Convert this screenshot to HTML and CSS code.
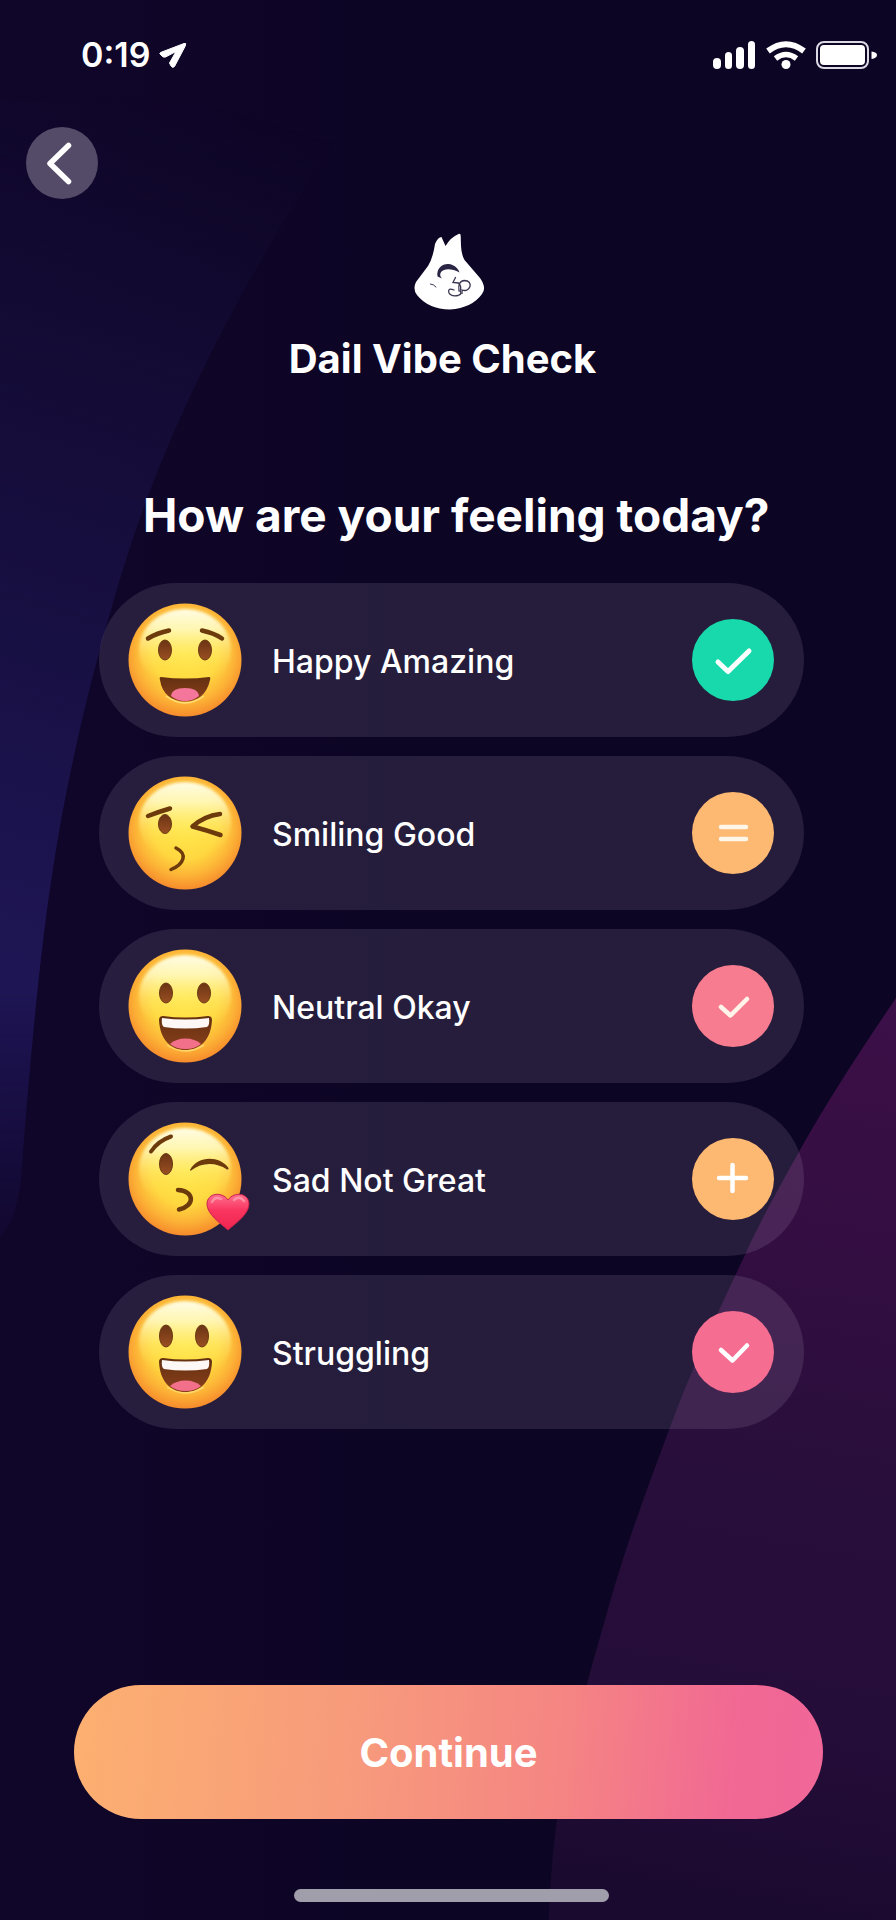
FILE: index.html
```html
<!DOCTYPE html>
<html lang="en">
<head>
<meta charset="utf-8">
<meta name="viewport" content="width=device-width, initial-scale=1">
<title>Dail Vibe Check</title>
<link rel="stylesheet" href="styles.css">
</head>
<body>
<div class="screen">
  <svg class="backdrop" viewBox="0 0 896 1920" preserveAspectRatio="none" aria-hidden="true">
    <defs>
      <linearGradient id="blue" gradientUnits="userSpaceOnUse" x1="260" y1="120" x2="0" y2="960">
        <stop offset="0" stop-color="#140b34" stop-opacity="0"/>
        <stop offset="0.3" stop-color="#150d38" stop-opacity="0.8"/>
        <stop offset="0.75" stop-color="#1a1249"/>
        <stop offset="1" stop-color="#1e1554"/>
      </linearGradient>
      <linearGradient id="blueEnd" x1="0" y1="0" x2="0" y2="1">
        <stop offset="0.8" stop-color="#fff"/>
        <stop offset="1" stop-color="#222"/>
      </linearGradient>
      <mask id="fade"><rect width="896" height="1240" fill="url(#blueEnd)"/></mask>
      <linearGradient id="plum" gradientUnits="userSpaceOnUse" x1="880" y1="1020" x2="720" y2="1900">
        <stop offset="0" stop-color="#3b0f47"/>
        <stop offset="0.25" stop-color="#340e42"/>
        <stop offset="0.5" stop-color="#290e3b"/>
        <stop offset="0.8" stop-color="#240d38"/>
        <stop offset="1" stop-color="#1b0a30"/>
      </linearGradient>
    </defs>
    <path d="M0 100L360 110C290 200 208 345 158 470C128 545 108 618 90 687C72 760 60 820 51 882C40 955 30 1060 22 1165C20 1200 12 1228 0 1236Z" fill="url(#blue)" mask="url(#fade)"/>
    <path d="M896 998C862 1048 828 1100 800 1150C772 1200 755 1232 745 1255C716 1316 692 1368 669 1430C646 1492 624 1550 605 1620C580 1705 564 1775 557 1820C552 1856 550 1890 549 1920L896 1920Z" fill="url(#plum)"/>
  </svg>

  <header class="status">
    <div class="status-left">
      <span class="time">0:19</span>
      <svg class="locate" viewBox="0 0 28 27" aria-hidden="true"><path d="M1.500 10.500L25 1.500Q27.500.500 26.500 3.500L15.500 24.500Q13.500 26.500 12 24L10.500 21L17 9.500L6.500 15Q4 15.500 3 14L1 12Q.500 11 1.500 10.500Z" fill="#fff" stroke="#fff" stroke-linejoin="round"/></svg>
    </div>
    <div class="status-right">
      <svg class="signal" viewBox="0 0 43 28" aria-label="Signal"><g fill="#fff"><rect x="0" y="17" width="8" height="11" rx="4"/><rect x="12" y="11" width="7" height="17" rx="3.500"/><rect x="23" y="6" width="8" height="22" rx="4"/><rect x="35" y="0" width="7" height="28" rx="3.500"/></g></svg>
      <svg class="wifi" viewBox="0 0 40 28" aria-label="Wi-Fi"><g fill="none" stroke="#fff" stroke-width="6"><path d="M2 10Q20 -3.500 38 10" /><path d="M9.500 17.500Q20 9.500 30.500 17.500" stroke-width="5.500"/></g><circle cx="20" cy="23.500" r="4.500" fill="#fff"/></svg>
      <svg class="battery" viewBox="0 0 62 28" aria-label="Battery"><rect x="1" y="1" width="51" height="26" rx="7" fill="none" stroke="#dcdae4" stroke-width="2"/><rect x="4" y="4" width="45" height="20" rx="4" fill="#fff"/><path d="M55.500 10.500Q61 11 61 14T55.500 18Z" fill="#fff"/></svg>
    </div>
  </header>

  <button class="back" type="button" aria-label="Back">
    <svg viewBox="0 0 72 72" aria-hidden="true"><path d="M42.500 18.500L24 36.500L42.500 54.500" fill="none" stroke="#fff" stroke-width="5.500" stroke-linecap="round" stroke-linejoin="round"/></svg>
  </button>

  <main class="content">
    <div class="brand">
      <svg class="logo" viewBox="0 0 71 77" aria-hidden="true">
        <path d="M21 11Q24 4 27.500 4L31.500 13Q37 4 44.500 1Q46.700 0 46.700 3L47 13Q47.500 22 50.500 27L66 45Q73 55 68 61Q58 75 36 76.500Q14 76 3 62Q-1.500 56 2 49L14 33Q19 25 21 11Z" fill="#fff"/>
        <path d="M23.500 43.500C22 35 29 30.500 34.500 31C40 31.500 44 35 45.500 39.500C37 35 29 35.500 26.500 40Q25.500 43 28 45.500Z" fill="#2b2545"/>
        <g fill="none" stroke="#3a3550" stroke-width="1.300" stroke-linecap="round"><path d="M16.500 51Q19.500 51 22 54" stroke-width="1"/><path d="M41.500 44.500L39 49.500L44.500 50Q47.500 53 46.500 57"/><path d="M40 57Q33.500 54.500 34.800 59.500Q37 64 44 62.500Q48.500 61 46 58"/><path d="M45 58Q43.500 48 50.500 47.500Q57 48 56 53.500Q53.500 59 48 57L48 60.500"/></g>
      </svg>
      <h1 class="title">Dail Vibe Check</h1>
    </div>

    <section class="mood" aria-labelledby="question">
      <h2 class="question" id="question">How are your feeling today?</h2>
      <ul class="options">
        <li>
          <button class="option" type="button">
            <svg class="face" viewBox="0 0 114 114" aria-hidden="true">
              <defs>
                <radialGradient id="skin" gradientUnits="userSpaceOnUse" cx="57" cy="50" r="66">
                  <stop offset="0" stop-color="#ffe445"/><stop offset="0.5" stop-color="#ffd840"/><stop offset="0.76" stop-color="#fcb236"/><stop offset="1" stop-color="#f5842a"/>
                </radialGradient>
                <linearGradient id="shine" x1="0" y1="0" x2="0" y2="1">
                  <stop offset="0" stop-color="#fffde6"/><stop offset="0.25" stop-color="#fffbc4" stop-opacity="0.85"/><stop offset="0.55" stop-color="#fff27a" stop-opacity="0.4"/><stop offset="0.85" stop-color="#ffe94f" stop-opacity="0"/>
                </linearGradient>
                <filter id="soft" x="-10%" y="-10%" width="120%" height="120%"><feGaussianBlur stdDeviation="1.600"/></filter>
                <linearGradient id="eye" x1="0" y1="0" x2="0" y2="1"><stop offset="0" stop-color="#6b3414"/><stop offset="1" stop-color="#9a4f22"/></linearGradient>
                <linearGradient id="mouth" x1="0" y1="0" x2="0" y2="1"><stop offset="0" stop-color="#64300f"/><stop offset="1" stop-color="#8a3f1d"/></linearGradient>
                <linearGradient id="heart" x1="0" y1="0" x2="0" y2="1"><stop offset="0" stop-color="#ff6f8d"/><stop offset="0.45" stop-color="#f93560"/><stop offset="1" stop-color="#f0254e"/></linearGradient>
                <g id="head"><circle cx="57" cy="57" r="56.500" fill="url(#skin)"/><ellipse cx="57" cy="47" rx="46" ry="41" fill="url(#shine)" filter="url(#soft)"/></g>
                <g id="grin">
                  <path d="M35 67Q57 70 80 67Q84 67 84 71C83 91 72 101 57.500 101S32 91 31 71Q31 67 35 67Z" fill="url(#mouth)"/>
                  <path d="M39 96Q57 108 76 96" fill="none" stroke="#ffe27a" stroke-width="1.500" opacity="0.8"/>
                  <path d="M42 95Q48 89.500 57.500 89.500T73 95Q67 100 57.500 100T42 95Z" fill="#f3708a"/>
                  <path d="M34 69Q57 72 81 69Q82 76 79 78Q57 81 36 78Q33 76 34 69Z" fill="#fdf8f5"/>
                </g>
              </defs>
              <use href="#head"/>
              <g fill="none" stroke="#6d3a0c" stroke-width="4.500" stroke-linecap="round"><path d="M20 35.500Q29 30 41 27.500"/><path d="M74 27.500Q86 30 94 35.500"/></g>
              <g fill="url(#eye)" stroke="#6b3a12"><ellipse cx="37" cy="47" rx="6.500" ry="10"/><ellipse cx="77" cy="47" rx="6.500" ry="10"/></g>
              <path d="M33 74Q57 77 81 74Q83 74 82 77C79 91 70 98.500 57 98.500S34 91 32 77Q31 74 33 74Z" fill="url(#mouth)"/>
              <path d="M38 93Q57 107 76 93" fill="none" stroke="#ffe27a" stroke-width="1.500"/>
              <path d="M43 93Q44 85 57 85T71 93Q65 98 57 98T43 93Z" fill="#f5769b"/>
            </svg>
            <span class="label">Happy Amazing</span>
            <svg class="badge badge-green" viewBox="0 0 82 82" aria-hidden="true"><path d="M26 43L36 52.500L57 32" fill="none" stroke="#fff" stroke-width="5" stroke-linecap="round" stroke-linejoin="round"/></svg>
          </button>
        </li>
        <li>
          <button class="option" type="button">
            <svg class="face" viewBox="0 0 114 114" aria-hidden="true">
              <use href="#head"/>
              <g fill="none" stroke="#6d3a0c" stroke-width="4.500" stroke-linecap="round" stroke-linejoin="round"><path d="M20 40Q30 36 42 32.500"/><path d="M92 38Q76 40 64.500 50.500Q78 54 92.500 59"/><path d="M48 72C60 78 56 88 43 93.500" stroke-width="3.500"/></g>
              <ellipse cx="37" cy="48" rx="6.500" ry="9.500" fill="url(#eye)" stroke="#6b3a12"/>
            </svg>
            <span class="label">Smiling Good</span>
            <svg class="badge badge-orange" viewBox="0 0 82 82" aria-hidden="true"><path d="M29 35H54M29 47H54" fill="none" stroke="#fff6ea" stroke-width="4.500" stroke-linecap="round"/></svg>
          </button>
        </li>
        <li>
          <button class="option" type="button">
            <svg class="face" viewBox="0 0 114 114" aria-hidden="true">
              <use href="#head"/>
              <g fill="url(#eye)" stroke="#6b3a12"><ellipse cx="38" cy="44" rx="6.500" ry="10"/><ellipse cx="76" cy="44" rx="6.500" ry="10"/></g>
              <use href="#grin"/>
            </svg>
            <span class="label">Neutral Okay</span>
            <svg class="badge badge-coral" viewBox="0 0 82 82" aria-hidden="true"><path d="M29 42L38.500 50.500L55 34" fill="none" stroke="#fff4ea" stroke-width="4.500" stroke-linecap="round" stroke-linejoin="round"/></svg>
          </button>
        </li>
        <li>
          <button class="option" type="button">
            <svg class="face" viewBox="0 0 114 114" aria-hidden="true">
              <use href="#head"/>
              <g fill="none" stroke="#6d3a0c" stroke-linecap="round" stroke-linejoin="round"><path d="M23 29.500Q30 19 43 14.500" stroke-width="4"/><path d="M50 68C67 69 67 84 51 87.500" stroke-width="4.500"/></g>
              <path d="M62 48C70 33 92 34 100.500 46Q101 48 99 47.500C88 40 74 40 63 48.500Q62 49 62 48Z" fill="#6d3a0c"/>
              <ellipse cx="38" cy="42" rx="6.500" ry="10.500" fill="url(#eye)" stroke="#6b3a12"/>
              <path d="M100 108C92 101 79 92 79 82C79 71 94 69 100 78C106 69 121 71 121 82C121 92 108 101 100 108Z" fill="url(#heart)" stroke="#c8224c"/>
              <path d="M84 80Q87 74 93 77M106 78Q111 73 116 79" fill="none" stroke="#ffb0c0" stroke-width="2.500" stroke-linecap="round" opacity="0.6"/>
            </svg>
            <span class="label">Sad Not Great</span>
            <svg class="badge badge-orange" viewBox="0 0 82 82" aria-hidden="true"><path d="M27 40H54M40.500 27V53" fill="none" stroke="#fff" stroke-width="4.500" stroke-linecap="round"/></svg>
          </button>
        </li>
        <li>
          <button class="option" type="button">
            <svg class="face" viewBox="0 0 114 114" aria-hidden="true">
              <use href="#head"/>
              <g fill="url(#eye)" stroke="#6b3a12"><ellipse cx="38" cy="41" rx="6.500" ry="11"/><ellipse cx="74" cy="41" rx="6.500" ry="11"/></g>
              <use href="#grin" y="-4"/>
            </svg>
            <span class="label">Struggling</span>
            <svg class="badge badge-pink" viewBox="0 0 82 82" aria-hidden="true"><path d="M29 39L40.500 49.500L55 34.500" fill="none" stroke="#fff" stroke-width="4.500" stroke-linecap="round" stroke-linejoin="round"/></svg>
          </button>
        </li>
      </ul>
    </section>
  </main>

  <footer class="footer">
    <div class="action">
      <button class="continue" type="button">Continue</button>
    </div>
    <div class="home">
      <div class="home-bar"></div>
    </div>
  </footer>
</div>
</body>
</html>
```

FILE: styles.css
```css
* {
  box-sizing: border-box;
}

body {
  margin: 0;
  background: #0d0524;
  color: #fff;
  font-family: Inter, Roboto, "Liberation Sans", sans-serif;
}

button {
  border: 0;
  padding: 0;
  color: inherit;
  font: inherit;
  cursor: pointer;
}

svg {
  display: block;
  flex: none;
}

.screen {
  position: relative;
  isolation: isolate;
  display: flex;
  flex-direction: column;
  min-height: 100vh;
  background: linear-gradient(90deg, #10062a, #0d0524 50%);
}

.backdrop {
  position: absolute;
  inset: 0;
  z-index: -1;
  width: 100%;
  height: 100%;
}

.status {
  display: flex;
  justify-content: space-between;
  align-items: center;
  padding: 37px 18px 0 81px;
}

.status-left,
.status-right {
  display: flex;
  align-items: center;
}

.status-left {
  gap: 9px;
}

.status-right {
  gap: 10px;
}

.time {
  font-size: 34px;
  font-weight: 600;
  line-height: 36px;
}

.locate {
  width: 28px;
  height: 27px;
}

.signal {
  width: 43px;
  height: 28px;
}

.wifi {
  width: 40px;
  height: 28px;
}

.battery {
  width: 62px;
  height: 28px;
}

.back {
  width: 72px;
  height: 72px;
  margin: 54px 0 0 26px;
  border-radius: 50%;
  background: #534b68;
}

.content {
  padding: 34px 92px 40px 99px;
}

.brand {
  display: flex;
  flex-direction: column;
  align-items: center;
  gap: 24px;
  padding-right: 4px;
}

.logo {
  width: 71px;
  height: 77px;
}

.title {
  margin: 0;
  padding-right: 14px;
  font-size: 40px;
  font-weight: 700;
  line-height: 50px;
}

.mood {
  margin-top: 102px;
}

.question {
  margin: 0;
  padding-left: 44px;
  font-size: 46px;
  font-weight: 700;
  line-height: 58px;
}

.options {
  display: grid;
  gap: 19px;
  margin: 39px 0 0;
  padding: 0;
  list-style: none;
}

.option {
  display: flex;
  align-items: center;
  width: 100%;
  padding: 20px 30px 20px 29px;
  border-radius: 77px;
  background: rgba(246, 240, 255, 0.105);
  text-align: left;
}

.face {
  width: 114px;
  height: 114px;
  overflow: visible;
}

.label {
  flex: 1;
  padding: 3px 0 0 30px;
  font-size: 32px;
  font-weight: 500;
  line-height: 40px;
}

.badge {
  width: 82px;
  height: 82px;
  border-radius: 50%;
}

.badge-green {
  background: #18d9ac;
}

.badge-orange {
  background: #fdb872;
}

.badge-coral {
  background: #f87c8f;
}

.badge-pink {
  background: #f56d90;
}

.footer {
  margin-top: auto;
}

.action {
  padding: 0 73px 0 74px;
}

.continue {
  width: 100%;
  height: 134px;
  border-radius: 67px;
  background: linear-gradient(95deg, #fcb070, #f79a7c 38%, #f58583 65%, #f16894 88%, #f06799);
  font-size: 40px;
  font-weight: 700;
}

.home {
  display: flex;
  justify-content: center;
  padding: 70px 92px 18px 99px;
}

.home-bar {
  width: 315px;
  max-width: 100%;
  height: 13px;
  border-radius: 7px;
  background: #a19eac;
}
```
